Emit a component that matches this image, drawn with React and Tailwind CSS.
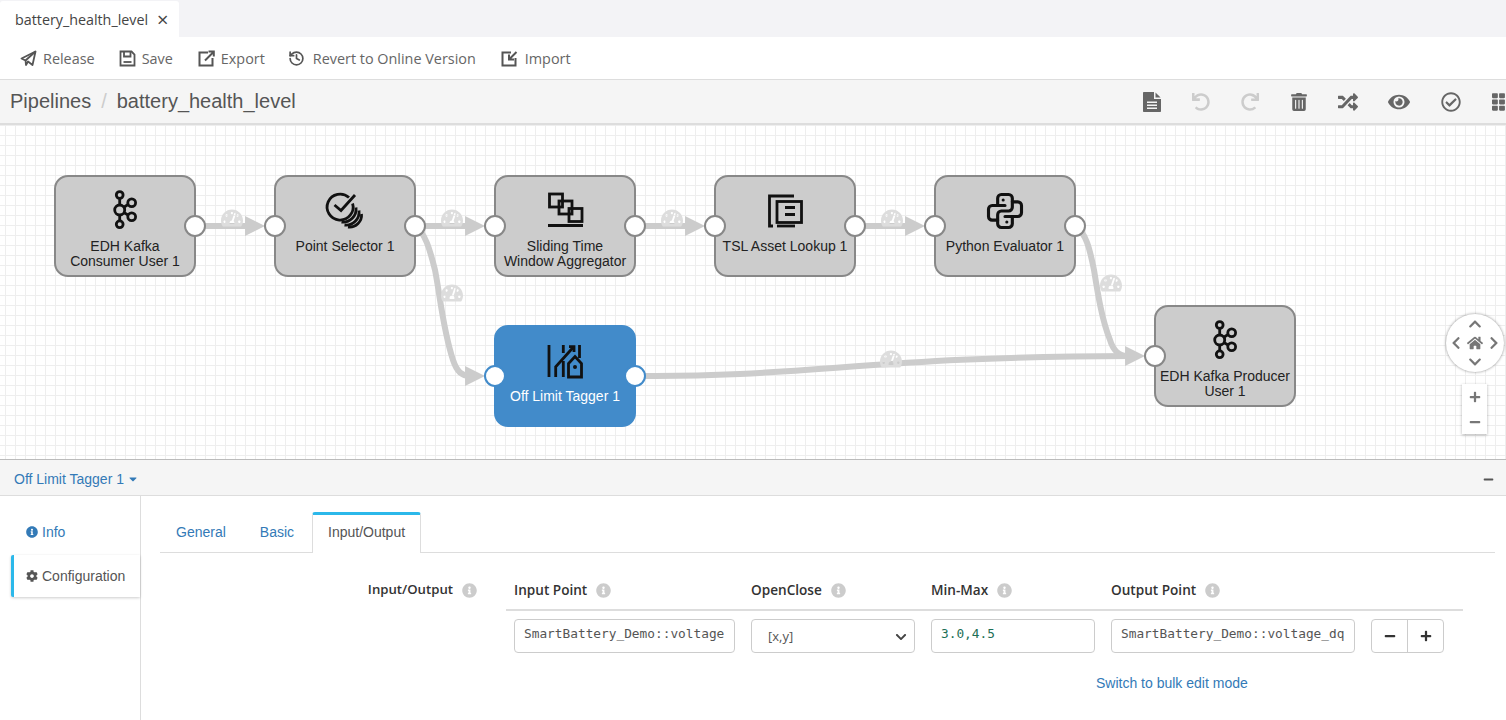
import {
  FaUndo,
  FaRedo,
  FaTrashAlt,
  FaRandom,
  FaEye,
  FaRegCheckCircle,
  FaTh,
  FaTachometerAlt,
  FaHome,
  FaChevronUp,
  FaChevronDown,
  FaChevronLeft,
  FaChevronRight,
  FaPlus,
  FaMinus,
  FaInfoCircle,
  FaCog,
  FaCaretDown,
} from 'react-icons/fa'
import { LuHistory } from 'react-icons/lu'
import { TbBrandPython } from 'react-icons/tb'

const uiFont = "font-['Open_Sans',sans-serif]"
const arialFont = "font-['Liberation_Sans',Arial,sans-serif]"

function KafkaIcon() {
  return (
    <svg width="44" height="44" viewBox="0 0 44 44" fill="none" stroke="#111" strokeWidth="2.8">
      <path d="M16.7 9.5V31.5M16.7 21L25 15.5M16.7 21L25 26" />
      <circle cx="16.7" cy="6" r="3.4" fill="#ccc" />
      <circle cx="16.7" cy="21" r="5" fill="#ccc" />
      <circle cx="16.7" cy="35.3" r="3.4" fill="#ccc" />
      <circle cx="28.7" cy="13.7" r="3.9" fill="#ccc" />
      <circle cx="28.7" cy="27.7" r="3.9" fill="#ccc" />
    </svg>
  )
}

function SelectorIcon() {
  return (
    <svg width="44" height="44" viewBox="0 0 44 44" fill="none" stroke="#111" strokeWidth="2.8">
      <path d="M26 8.6A13 13 0 1 0 29.6 14.5" />
      <path d="M11.5 16L18 21.5L32 6" />
      <path d="M33 18.5A13 13 0 0 1 18.5 33" />
      <path d="M36 21.5A13 13 0 0 1 21.5 36" />
      <path d="M38.5 25A12 12 0 0 1 25 38" />
    </svg>
  )
}

function AggregatorIcon() {
  return (
    <svg width="44" height="44" viewBox="0 0 44 44" fill="none" stroke="#111" strokeWidth="2.8">
      <rect x="6.5" y="5" width="13" height="13" />
      <rect x="16" y="12" width="13" height="13" />
      <rect x="26" y="19.5" width="13" height="13" />
      <path d="M5 36.5H40" />
    </svg>
  )
}

function LookupIcon() {
  return (
    <svg width="44" height="44" viewBox="0 0 44 44" fill="none" stroke="#111" strokeWidth="2.8">
      <path d="M31 7H6.5V37H10" />
      <path d="M14 37H32" />
      <rect x="14" y="12.5" width="24.5" height="21" />
      <path d="M22 18.5H32M22 25.5H32" />
    </svg>
  )
}

function PythonIcon() {
  return <TbBrandPython size={48} strokeWidth={1.7} color="#111" />
}

function TaggerIcon() {
  return (
    <svg width="44" height="44" viewBox="0 0 44 44" fill="none" stroke="#111" strokeWidth="2.8">
      <path d="M6 6V38" />
      <path d="M12.7 38V27.7L30.3 8.3" />
      <path d="M26 7.7H31V13" />
      <path d="M20.3 6V14M20.3 22V38" />
      <path d="M36.5 6V19" />
      <path d="M25.5 38V24.5L32 17.5L38.5 24.5V38Z" />
      <circle cx="32" cy="28" r="2" fill="#111" stroke="none" />
    </svg>
  )
}

function ReleaseIcon() {
  return (
    <svg width="17" height="17" viewBox="0 0 17 17" fill="none" stroke="#555" strokeWidth="1.8" strokeLinejoin="round">
      <path d="M1.5 8.5L15.5 1.5L12.5 15L8 11.5L6 15L5.5 10.5Z" />
      <path d="M15.5 1.5L5.5 10.5" />
    </svg>
  )
}

function SaveIcon() {
  return (
    <svg width="17" height="17" viewBox="0 0 17 17" fill="none" stroke="#555" strokeWidth="1.8">
      <path d="M1.5 1.5H12.5L15.5 4.5V15.5H1.5Z" />
      <path d="M5 1.5V6.5H11.5V1.5" />
      <path d="M4.5 12H12.5" />
    </svg>
  )
}

// box with an arrow going out of the top right corner
function ExportIcon() {
  return (
    <svg width="17" height="17" viewBox="0 0 17 17" fill="none" stroke="#555" strokeWidth="2">
      <path d="M10 2.5H1.5V15.5H14.5V8" />
      <path d="M7 10.5L15.5 2M10.5 1.5H15.8V6.5" />
    </svg>
  )
}

function ImportIcon() {
  return (
    <svg width="17" height="17" viewBox="0 0 17 17" fill="none" stroke="#555" strokeWidth="2">
      <path d="M10 2.5H1.5V15.5H14.5V8" />
      <path d="M15.5 2L8.5 9M8 4.5V9.5H13" />
    </svg>
  )
}

function FileIcon() {
  return (
    <svg width="18" height="20" viewBox="0 0 18 20" fill="#666">
      <path d="M1 0H11V7H18V19C18 19.6 17.6 20 17 20H1C0.4 20 0 19.6 0 19V1C0 0.4 0.4 0 1 0Z" />
      <path d="M12.5 0.5L17.6 5.5H12.5Z" />
      <path d="M4 9.5H14V11H4ZM4 12.5H14V14H4ZM4 15.5H14V17H4Z" fill="#f5f5f5" />
    </svg>
  )
}

const actions = [
  { label: 'Release', icon: <ReleaseIcon />, style: 'gap-[6px]' },
  { label: 'Save', icon: <SaveIcon />, style: 'gap-[6px]' },
  { label: 'Export', icon: <ExportIcon />, style: 'gap-[6px] ml-[1px]' },
  { label: 'Revert to Online Version', icon: <LuHistory size={17} strokeWidth={2.4} className="text-[#555]" />, style: 'gap-[8px] -ml-[1px]' },
  { label: 'Import', icon: <ImportIcon />, style: 'gap-[7px] ml-[1px]' },
]

const toolIcons = [
  { icon: <FileIcon />, style: 'text-[#666]' },
  { icon: <FaUndo size={18} />, style: 'text-[#ccc]' },
  { icon: <FaRedo size={18} />, style: 'text-[#ccc]' },
  { icon: <FaTrashAlt size={18} />, style: 'text-[#666]' },
  { icon: <FaRandom size={20} />, style: 'text-[#666]' },
  { icon: <FaEye size={22} />, style: 'text-[#666] ml-[2px]' },
  { icon: <FaRegCheckCircle size={20} />, style: 'text-[#666] ml-[3px]' },
  { icon: <FaTh size={20} />, style: 'text-[#666] ml-[2px]' },
]

const nodes = [
  { pos: 'left-[54px] top-[50px]', lines: ['EDH Kafka', 'Consumer User 1'], icon: <KafkaIcon />, input: false },
  { pos: 'left-[274px] top-[50px]', lines: ['Point Selector 1'], icon: <SelectorIcon />, input: true },
  { pos: 'left-[494px] top-[50px]', lines: ['Sliding Time', 'Window Aggregator'], icon: <AggregatorIcon />, input: true },
  { pos: 'left-[714px] top-[50px]', lines: ['TSL Asset Lookup 1'], icon: <LookupIcon />, input: true },
  { pos: 'left-[934px] top-[50px]', lines: ['Python Evaluator 1'], icon: <PythonIcon />, input: true },
  { pos: 'left-[1154px] top-[180px]', lines: ['EDH Kafka Producer', 'User 1'], icon: <KafkaIcon />, input: true, noOutput: true },
  { pos: 'left-[494px] top-[200px]', lines: ['Off Limit Tagger 1'], icon: <TaggerIcon />, input: true, active: true },
]

const gauges = [
  'left-[221px] top-[82px]',
  'left-[441px] top-[82px]',
  'left-[661px] top-[82px]',
  'left-[881px] top-[82px]',
  'left-[441px] top-[157px]',
  'left-[1100px] top-[147px]',
  'left-[880px] top-[223px]',
]

function Node({ node }) {
  const box = node.active
    ? 'bg-[#428bca] border-[#428bca] text-white'
    : 'bg-[#ccc] border-[#888] text-[#222]'
  const port = node.active ? 'border-[#428bca]' : 'border-[#888]'
  return (
    <div className={`absolute ${node.pos} w-[142px] h-[102px] rounded-[14px] border-2 flex flex-col items-center pt-3 ${box}`}>
      <div className="h-[44px] w-[44px] flex items-center justify-center">{node.icon}</div>
      <div className={`mt-[6px] text-[14px] leading-[15px] text-center whitespace-nowrap ${arialFont}`}>
        {node.lines.map((line) => (
          <div key={line}>{line}</div>
        ))}
      </div>
      {node.input && (
        <div className={`absolute -left-[12px] top-[38px] w-[22px] h-[22px] rounded-full bg-white border-2 ${port}`} />
      )}
      {!node.noOutput && (
        <div className={`absolute -right-[12px] top-[38px] w-[22px] h-[22px] rounded-full bg-white border-2 ${port}`} />
      )}
    </div>
  )
}

function Canvas() {
  return (
    <div className="relative h-[334px] shrink-0 overflow-hidden bg-white bg-[linear-gradient(#eee_1px,transparent_1px),linear-gradient(90deg,#eee_1px,transparent_1px)] bg-size-[10px_10px] bg-position-[5px_0px]">
      <svg className="absolute left-0 top-0" width="1506" height="334" viewBox="0 125 1506 334" fill="none">
        <g stroke="#ccc" strokeWidth="6">
          <path d="M195 226H250" />
          <path d="M415 226H470" />
          <path d="M635 226H690" />
          <path d="M855 226H910" />
          <path d="M415 226C425 232 430 250 435 270C440 295 443 330 453 360C457 372 462 376 470 376" />
          <path d="M1075 226C1086 232 1090 250 1094 270C1098 295 1102 320 1110 340C1113 350 1118 356 1128 356" />
          <path d="M635 376C800 378 880 356 1130 356" />
        </g>
        <g fill="#ccc">
          <path d="M245 216L265 226L245 236Z" />
          <path d="M465 216L485 226L465 236Z" />
          <path d="M685 216L705 226L685 236Z" />
          <path d="M905 216L925 226L905 236Z" />
          <path d="M465 366L485 376L465 386Z" />
          <path d="M1125 346L1145 356L1125 366Z" />
        </g>
      </svg>

      {gauges.map((pos) => (
        <FaTachometerAlt key={pos} size={22} className={`absolute ${pos} text-[#ddd]`} />
      ))}

      {nodes.map((node) => (
        <Node key={node.pos} node={node} />
      ))}

      <div className="absolute left-[1446px] top-[189px] w-[58px] h-[58px] rounded-full bg-white shadow-[0_0_3px_rgba(0,0,0,0.45)] grid grid-cols-3 grid-rows-3 items-center justify-items-center text-[#777]">
        <span />
        <FaChevronUp size={14} />
        <span />
        <FaChevronLeft size={14} />
        <FaHome size={16} />
        <FaChevronRight size={14} />
        <span />
        <FaChevronDown size={14} />
        <span />
      </div>

      <div className="absolute left-[1462px] top-[259px] w-[25px] h-[50px] bg-white shadow-[0_1px_3px_rgba(0,0,0,0.3)] flex flex-col items-center justify-around text-[#777]">
        <FaPlus size={12} />
        <FaMinus size={12} />
      </div>
    </div>
  )
}

function InfoDot() {
  return <FaInfoCircle size={15} className="text-[#ccc] shrink-0" />
}

function Header({ label }) {
  return (
    <div className={`flex items-center gap-[9px] text-[13.6px] font-semibold text-[#333] ${uiFont}`}>
      {label}
      <InfoDot />
    </div>
  )
}

const fieldClass =
  "h-[34px] w-full rounded-[4px] border border-[#ccc] bg-white pl-[9px] pr-[10px] pb-[6px] text-[12.8px] outline-none font-['DejaVu_Sans_Mono',monospace]"

function ConfigPanel() {
  return (
    <div className="flex-1 min-h-0 flex flex-col border-t border-[#bbb]">
      <div className={`h-[36px] shrink-0 bg-[#f5f5f5] border-b border-[#ddd] flex items-center justify-between pl-[14px] pr-[12px] pt-[3px] text-[14px] text-[#337ab7] ${arialFont}`}>
        <div className="flex items-center gap-[3px]">
          Off Limit Tagger 1
          <FaCaretDown size={12} />
        </div>
        <FaMinus size={11} className="text-[#555]" />
      </div>

      <div className="flex-1 min-h-0 flex">
        <div className={`w-[141px] shrink-0 border-r border-[#ddd] pt-[17px] pl-[11px] text-[14px] ${arialFont}`}>
          <div className="h-[42px] pl-[15px] pb-[4px] flex items-center gap-[4px] text-[#337ab7]">
            <FaInfoCircle size={12} />
            Info
          </div>
          <div className="h-[42px] w-[129px] pl-[12px] flex items-center gap-[4px] text-[#555] bg-white border-l-[3px] border-[#2bb8ea] rounded-l-[2px] shadow-[0_1px_3px_rgba(0,0,0,0.2)]">
            <FaCog size={12} />
            Configuration
          </div>
        </div>

        <div className="flex-1 min-w-0 pl-[19px] pr-[11px] pt-[16px]">
          <div className={`h-[41px] flex border-b border-[#ddd] text-[14px] ${arialFont}`}>
            <div className="pl-[16px] pr-[17px] flex items-center text-[#337ab7]">General</div>
            <div className="px-[17px] flex items-center text-[#337ab7]">Basic</div>
            <div className="ml-[1px] h-[41px] w-[109px] pb-[3px] flex items-center justify-center bg-white text-[#555] border border-b-0 border-[#ddd] border-t-[3px] border-t-[#2bb8ea] rounded-t-[3px]">
              Input/Output
            </div>
          </div>

          <div className="flex pt-[27px]">
            <div className={`w-[346px] h-[20px] flex justify-end items-center gap-[9px] pr-[29px] text-[13.2px] font-semibold text-[#333] ${uiFont}`}>
              Input/Output
              <InfoDot />
            </div>
            <div className="w-[957px]">
              <div className="grid grid-cols-[221px_164px_164px_244px_73px] gap-x-[16px] pl-[8px] h-[31px] border-b-2 border-[#ddd] items-start">
                <Header label="Input Point" />
                <Header label="OpenClose" />
                <Header label="Min-Max" />
                <Header label="Output Point" />
              </div>
              <div className="grid grid-cols-[221px_164px_164px_244px_73px] gap-x-[16px] pl-[8px] pt-[8px]">
                <input readOnly value="SmartBattery_Demo::voltage" className={`${fieldClass} text-[#555]`} />
                <div className="relative">
                  <select className={`h-[34px] w-full appearance-none rounded-[4px] border border-[#ccc] bg-white pl-[16px] pt-[1px] text-[13px] text-[#555] outline-none ${uiFont}`}>
                    <option>[x,y]</option>
                  </select>
                  <FaChevronDown size={12} className="absolute right-[8px] top-[12px] text-[#444]" />
                </div>
                <input readOnly value="3.0,4.5" className={`${fieldClass} text-[#1d6f56]`} />
                <input readOnly value="SmartBattery_Demo::voltage_dq" className={`${fieldClass} text-[#555]`} />
                <div className="flex h-[34px] rounded-[4px] border border-[#ccc] text-[#333]">
                  <div className="w-[36px] flex items-center justify-center border-r border-[#ccc]">
                    <FaMinus size={12} />
                  </div>
                  <div className="flex-1 flex items-center justify-center">
                    <FaPlus size={12} />
                  </div>
                </div>
              </div>
              <div className={`pl-[590px] pt-[20px] text-[14px] text-[#337ab7] ${arialFont}`}>Switch to bulk edit mode</div>
            </div>
          </div>
        </div>
      </div>
    </div>
  )
}

export default function App() {
  return (
    <div className="h-screen w-full overflow-hidden flex flex-col bg-white">
      <div className="h-[37px] shrink-0 bg-[#f3f3f6] pt-[1px]">
        <div className={`h-[36px] w-[179px] bg-white rounded-t-[3px] flex items-center pl-[15px] pt-[2px] gap-[9px] text-[14.3px] text-[#444] ${uiFont}`}>
          battery_health_level
          <span className="text-[20px] leading-none text-[#444]">×</span>
        </div>
      </div>

      <div className={`h-[43px] shrink-0 bg-white border-b border-[#ddd] flex items-center pl-[20px] pt-[2px] gap-[24px] text-[14.4px] text-[#666] ${uiFont}`}>
        {actions.map((action) => (
          <div key={action.label} className={`flex items-center ${action.style}`}>
            {action.icon}
            {action.label}
          </div>
        ))}
      </div>

      <div className="h-[45px] shrink-0 bg-[#f5f5f5] border-b-2 border-[#ddd] flex items-center justify-between pl-[10px]">
        <div className={`pb-[2px] text-[20px] text-[#555] ${arialFont}`}>
          Pipelines
          <span className="text-[#ccc] px-[10px]">/</span>
          battery_health_level
        </div>
        <div className="flex items-center -mr-[20px]">
          {toolIcons.map((tool, i) => (
            <div key={i} className={`w-[49px] flex justify-center ${tool.style}`}>
              {tool.icon}
            </div>
          ))}
        </div>
      </div>

      <Canvas />
      <ConfigPanel />
    </div>
  )
}
